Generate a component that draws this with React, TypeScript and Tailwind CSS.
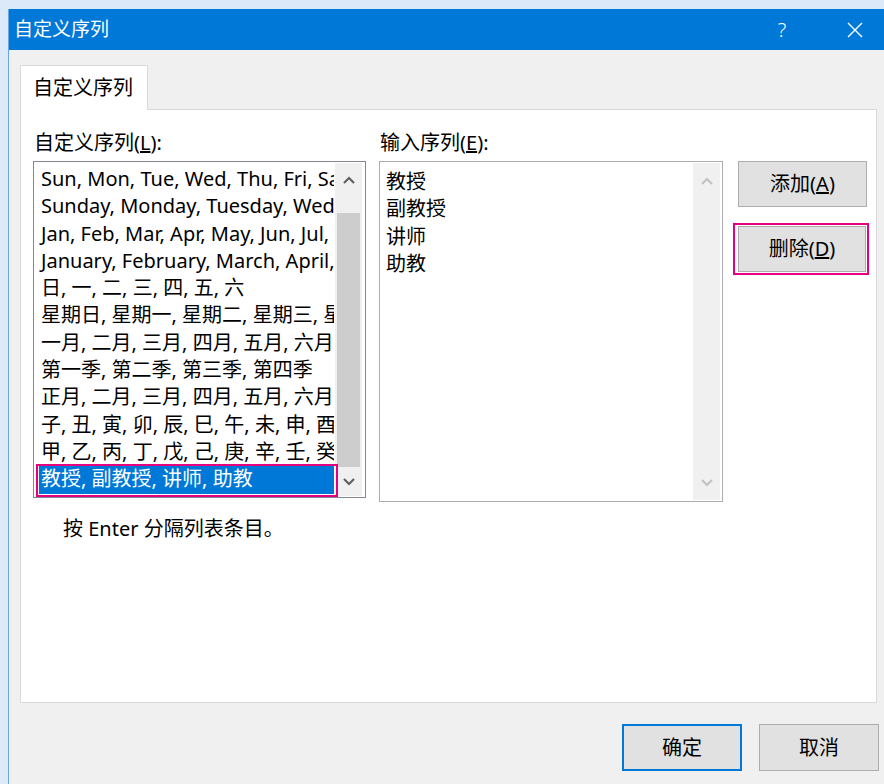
import React from 'react';

const FONT = { fontFamily: '"Noto Sans", "Noto Sans CJK SC", sans-serif' };

const customLists = [
  'Sun, Mon, Tue, Wed, Thu, Fri, Sat',
  'Sunday, Monday, Tuesday, Wednesday, Thursday, Friday, Saturday',
  'Jan, Feb, Mar, Apr, May, Jun, Jul, Aug, Sep, Oct, Nov, Dec',
  'January, February, March, April, May, June, July, August, September, October, November, December',
  '日, 一, 二, 三, 四, 五, 六',
  '星期日, 星期一, 星期二, 星期三, 星期四, 星期五, 星期六',
  '一月, 二月, 三月, 四月, 五月, 六月, 七月, 八月, 九月, 十月, 十一月, 十二月',
  '第一季, 第二季, 第三季, 第四季',
  '正月, 二月, 三月, 四月, 五月, 六月, 七月, 八月, 九月, 十月, 十一月, 腊月',
  '子, 丑, 寅, 卯, 辰, 巳, 午, 未, 申, 酉, 戌, 亥',
  '甲, 乙, 丙, 丁, 戊, 己, 庚, 辛, 壬, 癸',
  '教授, 副教授, 讲师, 助教',
];

const entries = ['教授', '副教授', '讲师', '助教'];

function Chevron({ up, color }: { up?: boolean; color: string }) {
  return (
    <svg width="12" height="8" viewBox="0 0 12 8" fill="none">
      <polyline
        points={up ? '1,7 6,2 11,7' : '1,1 6,6 11,1'}
        stroke={color}
        strokeWidth="2.2"
        strokeLinejoin="miter"
      />
    </svg>
  );
}

function Btn({ children, className = '' }: { children: React.ReactNode; className?: string }) {
  return (
    <button className={`h-[46px] bg-[#e1e1e1] border border-[#adadad] text-[20px] text-black flex items-center justify-center ${className}`}>
      {children}
    </button>
  );
}

export default function App() {
  const selected = customLists.length - 1;

  return (
    <div className="w-[884px] h-[784px] bg-[#dce9f8] pl-[8px] pt-[9px] flex overflow-hidden" style={FONT}>
      <div className="flex-1 flex flex-col border-l border-[#6aa6e6]">
        {/* title bar */}
        <div className="h-[41px] bg-[#0078d7] flex items-center pl-[5px] text-white shrink-0">
          <span className="text-[19px] leading-none">自定义序列</span>
          <div className="ml-auto flex items-center pr-[6px]">
            <span className="w-[46px] text-center text-[20px] font-light leading-none">?</span>
            <div className="w-[46px] ml-[27px] flex justify-center">
              <svg width="16" height="16" viewBox="0 0 16 16">
                <path d="M1 1 L15 15 M15 1 L1 15" stroke="white" strokeWidth="1.4" />
              </svg>
            </div>
          </div>
        </div>

        <div className="flex-1 bg-[#f0f0f0] pl-[11px] flex flex-col">
          {/* tab header */}
          <div className="pt-[15px] flex">
            <div className="relative z-10 -mb-px w-[128px] h-[45px] bg-white border border-b-0 border-[#d9d9d9] flex items-center pl-[12px] text-[20px] text-black">
              自定义序列
            </div>
          </div>

          {/* tab panel */}
          <div className="w-[857px] h-[594px] bg-white border border-[#d9d9d9] pl-[12px] pt-[22px]">
            <div className="flex">
              {/* custom lists */}
              <div className="w-[333px]">
                <div className="pl-[1px] h-[29px] text-[20px] leading-[22px] text-black">
                  自定义序列(<span className="underline">L</span>):
                </div>
                <div className="h-[337px] border border-[#828790] bg-white flex">
                  <div className="w-[295px] ml-[5px] pt-[4px] flex flex-col">
                    {customLists.map((t, i) => (
                      <div
                        key={i}
                        className={`relative h-[27.3px] shrink-0 ${i === selected ? 'bg-[#0078d7] text-white' : 'text-black'}`}
                      >
                        <div className="h-full overflow-hidden whitespace-nowrap pl-[2px] text-[20px] leading-[26px]">{t}</div>
                        {i === selected && (
                          <div className="absolute -left-[3px] -right-[4px] -top-[2px] -bottom-[3px] border-2 border-[#e4007f]" />
                        )}
                      </div>
                    ))}
                  </div>
                  <div className="w-[27px] ml-[1px] my-[1px] bg-[#f0f0f0] flex flex-col">
                    <div className="h-[33px] flex items-center justify-center">
                      <Chevron up color="#606060" />
                    </div>
                    <div className="h-[17px]" />
                    <div className="h-[254px] mx-[2px] bg-[#cdcdcd]" />
                    <div className="flex-1 flex items-center justify-center">
                      <Chevron color="#606060" />
                    </div>
                  </div>
                </div>
                <div className="pl-[30px] mt-[20px] text-[20px] leading-[22px] text-black">按 Enter 分隔列表条目。</div>
              </div>

              {/* list entries */}
              <div className="w-[344px] ml-[13px]">
                <div className="pl-[1px] h-[29px] text-[20px] leading-[22px] text-black">
                  输入序列(<span className="underline">E</span>):
                </div>
                <div className="h-[341px] border border-[#abadb3] bg-white flex">
                  <div className="flex-1 pl-[6px] pt-[6px] flex flex-col">
                    {entries.map(e => (
                      <div key={e} className="h-[27.3px] text-[20px] leading-[27.3px] text-black">{e}</div>
                    ))}
                  </div>
                  <div className="w-[27px] my-[1px] mr-[2px] bg-[#f0f0f0] flex flex-col justify-between">
                    <div className="h-[35px] flex items-center justify-center">
                      <Chevron up color="#c2c2c2" />
                    </div>
                    <div className="h-[35px] flex items-center justify-center">
                      <Chevron color="#c2c2c2" />
                    </div>
                  </div>
                </div>
              </div>

              {/* actions */}
              <div className="w-[129px] ml-[15px] pt-[29px] flex flex-col">
                <Btn className="w-[129px]">添加(<span className="underline">A</span>)</Btn>
                <div className="relative mt-[19px] w-[128px]">
                  <Btn className="w-[128px]">删除(<span className="underline">D</span>)</Btn>
                  <div className="absolute -left-[5px] -right-[3px] -top-[3px] -bottom-[3px] border-2 border-[#e4007f]" />
                </div>
              </div>
            </div>
          </div>

          {/* footer */}
          <div className="flex justify-end gap-[17px] pt-[21px] pr-[5px]">
            <button className="w-[120px] h-[47px] bg-[#e1e1e1] border-2 border-[#0078d7] text-[20px] text-black">确定</button>
            <button className="w-[120px] h-[47px] bg-[#e1e1e1] border border-[#adadad] text-[20px] text-black">取消</button>
          </div>
        </div>
      </div>
    </div>
  );
}
